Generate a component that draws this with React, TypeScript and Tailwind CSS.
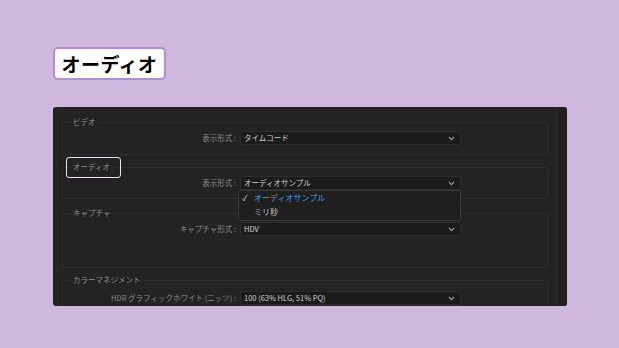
import React from "react";

const jp = { fontFamily: '"Noto Sans CJK JP", "Noto Sans", sans-serif' };

function Chevron() {
  return (
    <svg width="7" height="5" viewBox="0 0 7 5" className="shrink-0">
      <polyline points="1,1 3.5,3.6 6,1" fill="none" stroke="#9a9a9a" strokeWidth="1.1" />
    </svg>
  );
}

function Select({ value }: { value: string }) {
  return (
    <div className="w-[221px] h-[14px] bg-[#1b1b1b] border border-[#2d2d2d] rounded-[2px] flex items-center justify-between pl-[3px] pr-[5px]">
      <span className="text-[7.5px] leading-none text-[#cfcfcf] whitespace-nowrap">{value}</span>
      <Chevron />
    </div>
  );
}

function Row({ label, value, children }: { label: string; value: string; children?: React.ReactNode }) {
  return (
    <div className="flex items-center gap-[4px] relative">
      <div className="w-[173px] text-right text-[7.5px] leading-none text-[#8a8a8a] whitespace-nowrap">{label}</div>
      <div className="relative">
        <Select value={value} />
        {children}
      </div>
    </div>
  );
}

function Group({
  title,
  highlight,
  className,
  children,
}: {
  title: string;
  highlight?: boolean;
  className: string;
  children: React.ReactNode;
}) {
  return (
    <fieldset className={"border border-[#2f2f2f] rounded-[2px] w-[486px] min-w-0 " + className}>
      <legend className="ml-[7px] px-[3px] h-[10px] text-[7.5px] leading-[10px] text-[#8e8e8e] relative">
        {title}
        {highlight && (
          <span className="absolute left-[-4px] right-[-8px] top-[-5px] bottom-[-6px] border-[1.5px] border-[#ece2f3] rounded-[3px]" />
        )}
      </legend>
      {children}
    </fieldset>
  );
}

export default function App() {
  return (
    <div style={jp} className="w-[619px] h-[348px] bg-[#ceb8dd] overflow-hidden flex flex-col pl-[53px] pt-[47px]">
      <div className="w-[113px] h-[33px] bg-white border-2 border-[#b68ccf] rounded-[5px] flex items-center justify-center">
        <span className="text-[19px] font-bold text-black leading-none tracking-[0.5px]">オーディオ</span>
      </div>
      <div className="mt-[27px] w-[514px] h-[199px] bg-[#232323] rounded-[3px] overflow-hidden flex">
        <div className="w-[4px] shrink-0" />
        <div className="w-[5px] shrink-0 border-l border-[#2a2a2a]" />
        <div className="flex flex-col pt-[10px] w-[486px] shrink-0">
          <Group title="ビデオ" className="pb-[9px]">
            <div className="mt-[4px]">
              <Row label="表示形式 :" value="タイムコード" />
            </div>
          </Group>
          <Group title="オーディオ" highlight className="mt-[7px] pb-[8px] relative z-10">
            <div className="mt-[4px]">
              <Row label="表示形式 :" value="オーディオサンプル">
                <div className="absolute left-[-2px] top-[14px] w-[223px] h-[31px] bg-[#1f1f1f] border border-[#393939] rounded-[2px] flex flex-col pt-[1px]">
                  <div className="flex items-center h-[12px] pl-[3px] gap-[4px]">
                    <span className="text-[8px] text-[#d8d8d8] leading-none w-[8px]">✓</span>
                    <span className="text-[8px] leading-none text-[#4e9ce3]">オーディオサンプル</span>
                  </div>
                  <div className="flex items-center h-[17px] pl-[15px]">
                    <span className="text-[8px] leading-none text-[#c8c8c8]">ミリ秒</span>
                  </div>
                </div>
              </Row>
            </div>
          </Group>
          <Group title="キャプチャ" className="mt-[9px] pb-[31px]">
            <div className="mt-[4px]">
              <Row label="キャプチャ形式 :" value="HDV" />
            </div>
          </Group>
          <Group title="カラーマネジメント" className="mt-[7px] pb-[10px]">
            <div className="mt-[6px]">
              <Row label="HDR グラフィックホワイト (ニッツ) :" value="100 (63% HLG, 51% PQ)" />
            </div>
          </Group>
        </div>
        <div className="w-[8px] shrink-0" />
        <div className="w-[2px] shrink-0 border-l border-[#2a2a2a]" />
        <div className="w-[9px] shrink-0 bg-[#1f1f1f]" />
      </div>
    </div>
  );
}
